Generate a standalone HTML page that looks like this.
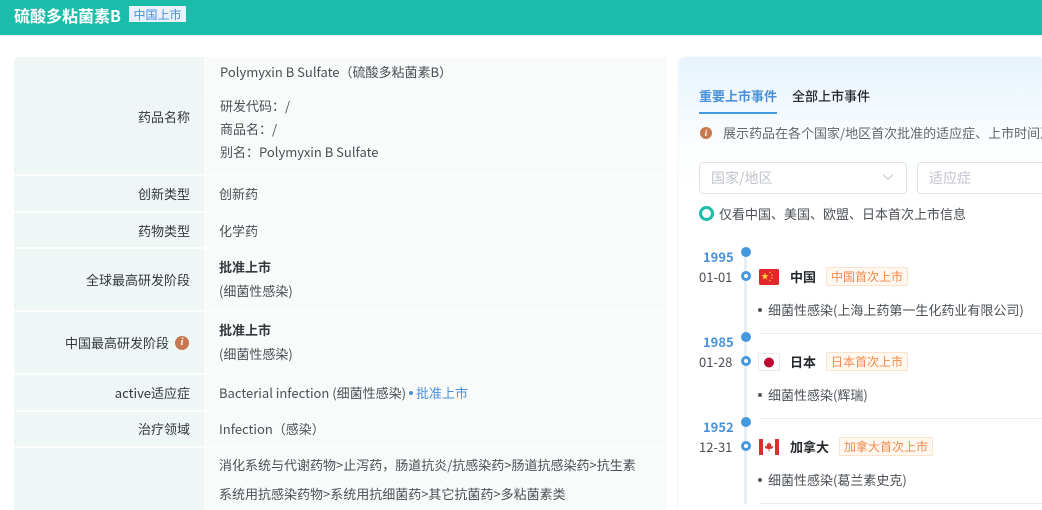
<!DOCTYPE html>
<html lang="zh-CN"><head><meta charset="utf-8"><style>
html,body{margin:0;padding:0;background:#fff}
body{position:relative;width:1042px;height:510px;overflow:hidden;font-family:"Noto Sans CJK SC","Liberation Sans",sans-serif;font-size:13px;color:#4a4f55}
.a{position:absolute;white-space:nowrap;line-height:18px}
.b{position:absolute}
.l{position:absolute;left:14px;width:176px;text-align:right;white-space:nowrap;line-height:18px;color:#33383d}
.lb{position:absolute;left:14px;width:190px;background:linear-gradient(90deg,#eef6f6 0,#eef6f6 90%,#f0f6f6 100%)}
.rb{position:absolute;left:205px;width:462px;background:#f9fbfb}
.sep{position:absolute;left:760px;height:1px;width:282px;background:#eaecee}
.y{position:absolute;left:703px;color:#4a90d8;font-weight:700;font-size:13px;line-height:18px}
.d{position:absolute;left:699px;color:#4a4f55;line-height:18px}
.big{position:absolute;left:741px;width:10px;height:10px;border-radius:50%;background:#4498de}
.small{position:absolute;left:741px;border-radius:50%;border:3px solid #4498de;background:#fff;width:4px;height:4px}
.tag{position:absolute;height:17px;line-height:17px;border:1px solid #fbe3cd;background:#fff8f1;color:#f08a4b;border-radius:2px;padding:0 4px;white-space:nowrap;font-size:12px}
.n{position:absolute;color:#24282c;font-weight:700;line-height:18px;white-space:nowrap}
.dot{position:absolute;left:758px;width:4px;height:4px;border-radius:50%;background:#555}
</style></head><body>
<div class="b" style="left:0;top:0;width:1042px;height:35px;background:#1cbcab;box-shadow:0 1px 2px #e6e8ea"></div>
<div class="a" style="left:14px;top:4px;font-size:16px;line-height:22px;color:#fff;font-weight:700">硫酸多粘菌素B</div>
<div class="a" style="left:129px;top:6px;width:57px;height:16px;line-height:16px;background:#e8f1fd;color:#4a90e2;font-size:12px;text-align:center"><span style="position:relative;top:1px">中国上市</span></div>

<div class="b" style="left:14px;top:57px;width:653px;height:453px;background:#fbfdfd;border-radius:4px 4px 0 0"></div>
<div class="lb" style="top:57px;height:117px;border-radius:4px 0 0 0"></div>
<div class="rb" style="top:57px;height:30px"></div>
<div class="rb" style="top:89px;height:85px"></div>
<div class="lb" style="top:176px;height:35px"></div><div class="rb" style="top:176px;height:35px"></div>
<div class="lb" style="top:213px;height:34px"></div><div class="rb" style="top:213px;height:34px"></div>
<div class="lb" style="top:249px;height:61px"></div><div class="rb" style="top:249px;height:61px"></div>
<div class="lb" style="top:312px;height:61px;border-radius:0 0 0 4px"></div><div class="rb" style="top:312px;height:61px"></div>
<div class="lb" style="top:375px;height:35px"></div><div class="rb" style="top:375px;height:35px"></div>
<div class="lb" style="top:412px;height:34px"></div><div class="rb" style="top:412px;height:34px"></div>
<div class="lb" style="top:448px;height:62px"></div><div class="rb" style="top:448px;height:62px"></div>

<div class="l" style="top:108px">药品名称</div>
<div class="l" style="top:185px">创新类型</div>
<div class="l" style="top:222px">药物类型</div>
<div class="l" style="top:271px">全球最高研发阶段</div>
<div class="l" style="top:334px;width:155px">中国最高研发阶段</div>
<div class="b" style="left:175px;top:336px;width:14px;height:14px;border-radius:50%;background:#c8784e;color:#fff;font:italic 700 10px/14px 'Liberation Serif',serif;text-align:center">i</div>
<div class="l" style="top:384px">active适应症</div>
<div class="l" style="top:420px">治疗领域</div>

<div class="a" style="left:220px;top:63px">Polymyxin B Sulfate（硫酸多粘菌素B）</div>
<div class="a" style="left:220px;top:97px">研发代码：/</div>
<div class="a" style="left:220px;top:120px">商品名：/</div>
<div class="a" style="left:220px;top:143px">别名：Polymyxin B Sulfate</div>
<div class="a" style="left:219px;top:185px">创新药</div>
<div class="a" style="left:219px;top:222px">化学药</div>
<div class="a" style="left:219px;top:258px;font-weight:700;color:#33383d">批准上市</div>
<div class="a" style="left:219px;top:282px">(细菌性感染)</div>
<div class="a" style="left:219px;top:321px;font-weight:700;color:#33383d">批准上市</div>
<div class="a" style="left:219px;top:345px">(细菌性感染)</div>
<div class="a" style="left:219px;top:384px">Bacterial infection (细菌性感染)</div>
<div class="b" style="left:409px;top:391px;width:4px;height:4px;border-radius:50%;background:#4a90d8"></div>
<div class="a" style="left:416px;top:384px;color:#4a90d8">批准上市</div>
<div class="a" style="left:219px;top:420px">Infection（感染）</div>
<div class="a" style="left:219px;top:456px">消化系统与代谢药物&gt;止泻药，肠道抗炎/抗感染药&gt;肠道抗感染药&gt;抗生素</div>
<div class="a" style="left:219px;top:485px">系统用抗感染药物&gt;系统用抗细菌药&gt;其它抗菌药&gt;多粘菌素类</div>

<div class="b" style="left:679px;top:57px;width:363px;height:453px;background:linear-gradient(180deg,#e6f4fd 0,#fbfdfe 85px,#fff 130px);border-radius:6px 0 0 0;box-shadow:-1px 0 2px #f1f3f5"></div>
<div class="a" style="left:699px;top:87px;color:#4a90d8;font-weight:700">重要上市事件</div>
<div class="a" style="left:792px;top:87px;color:#24282c;font-weight:500">全部上市事件</div>
<div class="b" style="left:699px;top:112px;width:78px;height:2px;background:#4498de"></div>
<div class="b" style="left:700px;top:127px;width:12px;height:12px;border-radius:50%;background:#c8784e;color:#fff;font:italic 700 9px/12px 'Liberation Serif',serif;text-align:center">i</div>
<div class="a" style="left:723px;top:124px;color:#62676c">展示药品在各个国家/地区首次批准的适应症、上市时间及</div>
<div class="b" style="left:699px;top:162px;width:206px;height:30px;border:1px solid #dfe2e6;border-radius:4px;background:#fff"></div>
<div class="a" style="left:711px;top:169px;font-size:14px;color:#c0c4cc">国家/地区</div>
<svg class="b" style="left:881px;top:172px" width="14" height="10" viewBox="0 0 14 10"><path d="M2 2.5L7 7.5L12 2.5" fill="none" stroke="#c0c4cc" stroke-width="1"/></svg>
<div class="b" style="left:917px;top:162px;width:140px;height:30px;border:1px solid #dfe2e6;border-radius:4px;background:#fff"></div>
<div class="a" style="left:929px;top:169px;font-size:14px;color:#c0c4cc">适应症</div>
<div class="b" style="left:699px;top:206px;width:9px;height:9px;border:3.5px solid #1cbcab;border-radius:50%"></div>
<div class="a" style="left:719px;top:205px">仅看中国、美国、欧盟、日本首次上市信息</div>

<div class="b" style="left:744px;top:252px;width:3px;height:252px;background:#e8eef4"></div>
<div class="sep" style="top:333px"></div><div class="sep" style="top:418px"></div><div class="sep" style="top:503px"></div>

<div class="big" style="top:247px"></div><div class="small" style="top:271px"></div>
<div class="y" style="top:248px">1995</div><div class="d" style="top:268px">01-01</div>
<svg class="b" style="left:759px;top:269px" width="20" height="16" viewBox="0 0 20 16"><rect width="20" height="16" rx="1.5" fill="#e3262b"/><polygon points="6,3.5 6.9,6.2 9.7,6.2 7.4,7.9 8.3,10.6 6,9 3.7,10.6 4.6,7.9 2.3,6.2 5.1,6.2" fill="#fcd93a"/><circle cx="11" cy="3.5" r=".7" fill="#fcd93a"/><circle cx="13" cy="6" r=".7" fill="#fcd93a"/><circle cx="13" cy="9" r=".7" fill="#fcd93a"/><circle cx="11" cy="11.5" r=".7" fill="#fcd93a"/></svg>
<div class="n" style="left:790px;top:268px">中国</div>
<div class="tag" style="left:826px;top:267px">中国首次上市</div>
<div class="dot" style="top:308px"></div>
<div class="a" style="left:768px;top:301px">细菌性感染(上海上药第一生化药业有限公司)</div>

<div class="big" style="top:332px"></div><div class="small" style="top:356px"></div>
<div class="y" style="top:333px">1985</div><div class="d" style="top:353px">01-28</div>
<svg class="b" style="left:758px;top:353px" width="22" height="18" viewBox="0 0 22 18"><rect x=".5" y=".5" width="21" height="17" rx="1.5" fill="#fff" stroke="#e8e8e8"/><circle cx="11" cy="9.5" r="5" fill="#bc0a35"/></svg>
<div class="n" style="left:790px;top:353px">日本</div>
<div class="tag" style="left:826px;top:352px">日本首次上市</div>
<div class="dot" style="top:393px"></div>
<div class="a" style="left:768px;top:386px">细菌性感染(辉瑞)</div>

<div class="big" style="top:417px"></div><div class="small" style="top:441px"></div>
<div class="y" style="top:418px">1952</div><div class="d" style="top:438px">12-31</div>
<svg class="b" style="left:759px;top:439px" width="20" height="16" viewBox="0 0 20 16"><rect width="20" height="16" rx="1.5" fill="#fff"/><rect width="4" height="16" fill="#d5312f"/><rect x="16" width="4" height="16" fill="#d5312f"/><path d="M10 3L11 5L12.4 4.5L12 7.5L13.8 6.7L14 8L13.3 9.5L10.4 10V12.5H9.6V10L6.7 9.5L6 8L6.2 6.7L8 7.5L7.6 4.5L9 5Z" fill="#d5312f"/></svg>
<div class="n" style="left:790px;top:438px">加拿大</div>
<div class="tag" style="left:839px;top:437px">加拿大首次上市</div>
<div class="dot" style="top:478px"></div>
<div class="a" style="left:768px;top:471px">细菌性感染(葛兰素史克)</div>
</body></html>
